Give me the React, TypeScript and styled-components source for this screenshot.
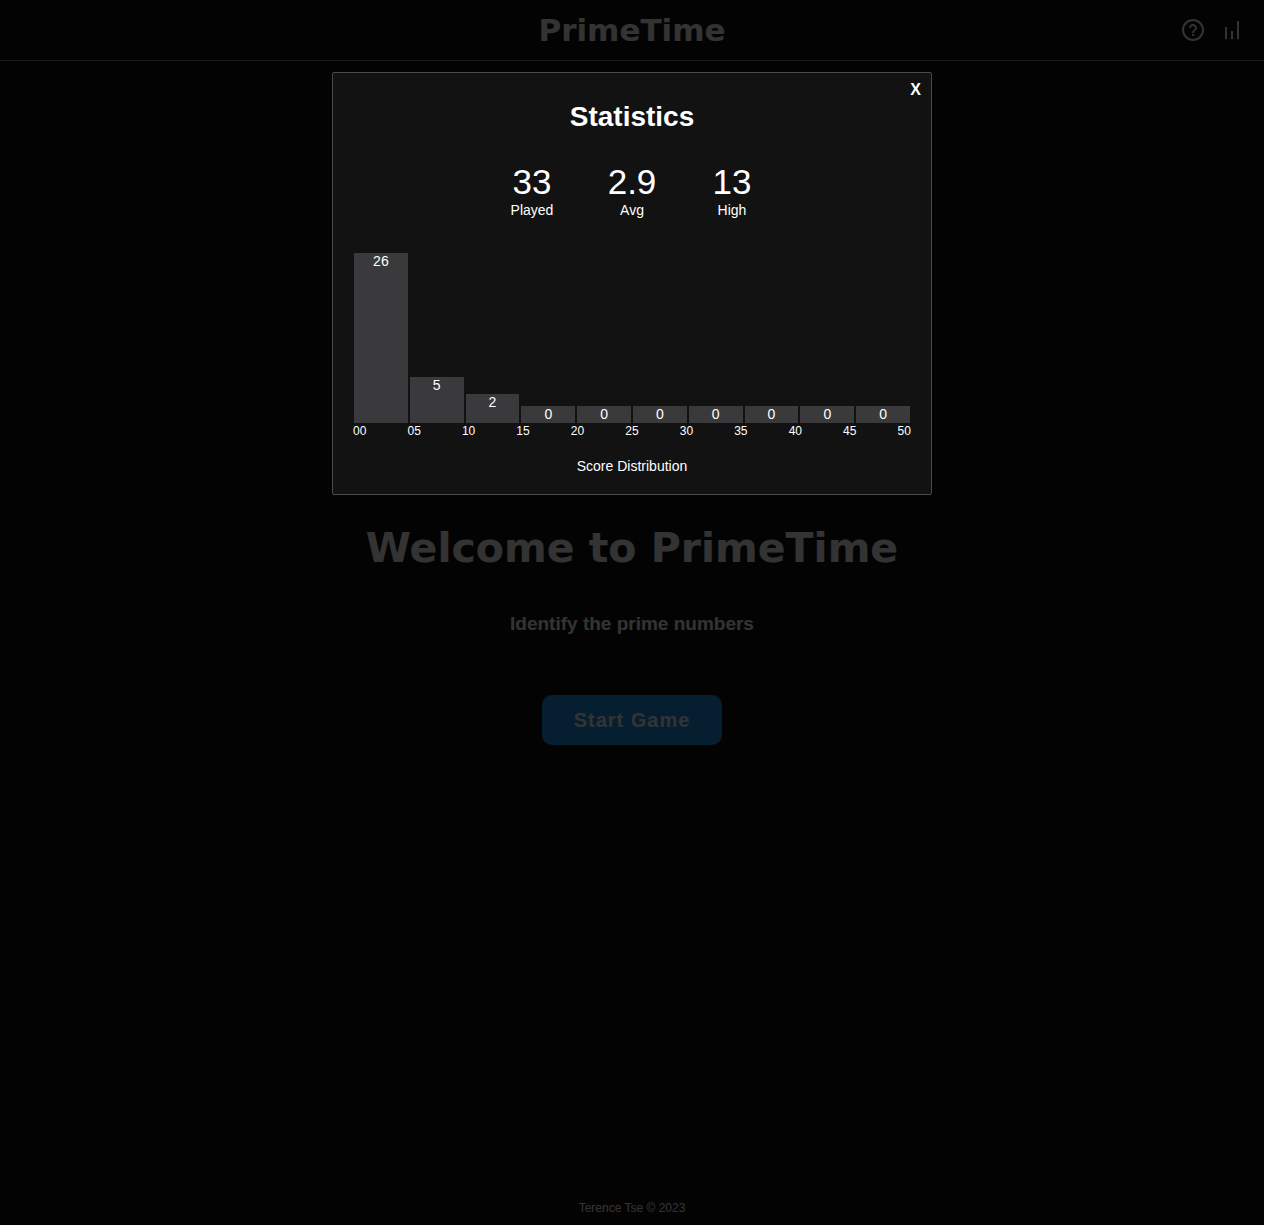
import React from "react";
import styled, { createGlobalStyle } from "styled-components";

const GlobalStyle = createGlobalStyle`
  *, *::before, *::after { box-sizing: border-box; }
  body {
    margin: 0;
    background: #121213;
    color: #fff;
    font-family: "Liberation Sans", Arial, sans-serif;
    font-size: 14px;
    line-height: 16px;
  }
  h1, h2, h3, p, dl, dd, ol, figure { margin: 0; padding: 0; }
  button { font-family: inherit; color: inherit; cursor: pointer; border: 0; }
`;

const display = `"DejaVu Sans", Verdana, sans-serif`;

const Page = styled.div`
  display: flex;
  flex-direction: column;
  min-height: 100vh;
`;

const Header = styled.header`
  display: grid;
  grid-template-columns: 1fr auto 1fr;
  align-items: center;
  height: 61px;
  padding: 0 20px;
  border-bottom: 1px solid #86868a;
`;

const Brand = styled.h1`
  grid-column: 2;
  font-family: ${display};
  font-size: 31px;
  line-height: 40px;
  font-weight: 700;
`;

const HeaderActions = styled.nav`
  display: flex;
  justify-content: flex-end;
  gap: 15px;
`;

const IconButton = styled.button`
  display: flex;
  padding: 0;
  background: none;
`;

const Welcome = styled.main`
  flex: 1;
  display: flex;
  flex-direction: column;
  align-items: center;
  padding: 459px 20px 40px;
  text-align: center;
`;

const WelcomeTitle = styled.h2`
  font-family: ${display};
  font-size: 41px;
  line-height: 56px;
  font-weight: 700;
`;

const Tagline = styled.h3`
  margin-top: 36px;
  font-size: 19px;
  line-height: 24px;
`;

const StartButton = styled.button`
  margin-top: 59px;
  min-width: 180px;
  height: 50px;
  border-radius: 10px;
  background: #1996f0;
  font-size: 20px;
  font-weight: 700;
  letter-spacing: 1px;
`;

const Footer = styled.footer`
  padding: 9px;
  font-size: 12px;
  text-align: center;
`;

const Overlay = styled.div`
  position: fixed;
  inset: 0;
  display: flex;
  justify-content: center;
  align-items: flex-start;
  padding-top: 72px;
  background: rgba(0, 0, 0, 0.8);
`;

const Dialog = styled.section`
  position: relative;
  width: 100%;
  max-width: 600px;
  padding: 28px 20px 20px;
  border: 1px solid #4a4a4c;
  border-radius: 2px;
  background: #121213;
  text-align: center;
`;

const CloseButton = styled.button`
  position: absolute;
  top: 7px;
  right: 10px;
  padding: 0;
  background: none;
  font-size: 16px;
  line-height: 20px;
  font-weight: 700;
`;

const DialogTitle = styled.h2`
  font-size: 28px;
  line-height: 32px;
`;

const Totals = styled.dl`
  display: flex;
  justify-content: center;
  margin: 29px 0 35px;
`;

const Total = styled.div`
  display: flex;
  flex-direction: column-reverse;
  width: 100px;
`;

const TotalValue = styled.dd`
  font-size: 35px;
  line-height: 40px;
`;

const Bars = styled.ol`
  display: flex;
  align-items: flex-end;
  height: 170px;
  list-style: none;
`;

const Bar = styled.li`
  flex: 1;
  margin: 0 1px;
  background: #3a3a3c;
`;

const Ticks = styled.div`
  display: flex;
  justify-content: space-between;
  font-size: 12px;
`;

const Caption = styled.figcaption`
  margin-top: 19px;
`;

const totals = [
  { label: "Played", value: "33" },
  { label: "Avg", value: "2.9" },
  { label: "High", value: "13" },
];
const counts = [26, 5, 2, 0, 0, 0, 0, 0, 0, 0];
const ticks = ["00", "05", "10", "15", "20", "25", "30", "35", "40", "45", "50"];
const highest = Math.max(...counts);

// Empty buckets keep a tenth of the height so that their count stays readable.
const barHeight = (count: number) => `${10 + (count / highest) * 90}%`;

const HelpIcon = () => (
  <svg width="24" height="24" viewBox="0 0 24 24" fill="currentColor" aria-hidden="true">
    <path d="M11 18h2v-2h-2v2zm1-16C6.480 2 2 6.480 2 12s4.480 10 10 10 10-4.480 10-10S17.520 2 12 2z" fill="none" />
    <circle cx="12" cy="12" r="10" fill="none" stroke="currentColor" strokeWidth="2" />
    <path d="M11 16h2v2h-2zM12 6c-2.210 0-4 1.790-4 4h2c0-1.100.9-2 2-2s2 .9 2 2c0 2-3 1.750-3 5h2c0-2.250 3-2.500 3-5 0-2.210-1.790-4-4-4z" />
  </svg>
);

const StatsIcon = () => (
  <svg width="24" height="24" viewBox="0 0 24 24" fill="none" stroke="currentColor" strokeWidth="2" aria-hidden="true">
    <path d="M6 21V9M12 21v-8M18 21V3" />
  </svg>
);

export default function App() {
  const [open, setOpen] = React.useState(true);
  return (
    <>
      <GlobalStyle />
      <Page>
        <Header>
          <Brand>PrimeTime</Brand>
          <HeaderActions>
            <IconButton aria-label="Help">
              <HelpIcon />
            </IconButton>
            <IconButton aria-label="Statistics" onClick={() => setOpen(true)}>
              <StatsIcon />
            </IconButton>
          </HeaderActions>
        </Header>
        <Welcome>
          <WelcomeTitle>Welcome to PrimeTime</WelcomeTitle>
          <Tagline>Identify the prime numbers</Tagline>
          <StartButton>Start Game</StartButton>
        </Welcome>
        <Footer>Terence Tse © 2023</Footer>
      </Page>
      {open && (
        <Overlay>
          <Dialog role="dialog" aria-modal="true" aria-labelledby="stats-title">
            <CloseButton aria-label="Close" onClick={() => setOpen(false)}>
              X
            </CloseButton>
            <DialogTitle id="stats-title">Statistics</DialogTitle>
            <Totals>
              {totals.map(({ label, value }) => (
                <Total key={label}>
                  <dt>{label}</dt>
                  <TotalValue>{value}</TotalValue>
                </Total>
              ))}
            </Totals>
            <figure>
              <Bars>
                {counts.map((count, i) => (
                  <Bar key={ticks[i]} style={{ height: barHeight(count) }}>
                    {count}
                  </Bar>
                ))}
              </Bars>
              <Ticks>
                {ticks.map((tick) => (
                  <span key={tick}>{tick}</span>
                ))}
              </Ticks>
              <Caption>Score Distribution</Caption>
            </figure>
          </Dialog>
        </Overlay>
      )}
    </>
  );
}
